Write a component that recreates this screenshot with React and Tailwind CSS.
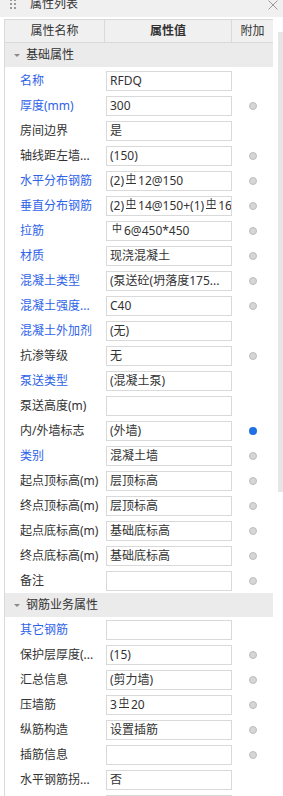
import React from "react";

const B = "text-[#2e63e8]";
const K = "text-[#333333]";

function R400() {
  return (
    <span className="inline-block relative -top-[3px] mx-[2px] text-[10px] leading-[9px] border-b border-[#333] pb-0">
      中
    </span>
  );
}
function R300() {
  return (
    <span className="inline-block relative -top-[3px] mx-[2px] text-[10px] leading-[10px]">中</span>
  );
}

const sec1 = [
  ["名称", true, "RFDQ", null],
  ["厚度(mm)", true, "300", "g"],
  ["房间边界", false, "是", null],
  ["轴线距左墙...", false, "(150)", "g"],
  ["水平分布钢筋", true, <>(2)<R400 />12@150</>, "g"],
  ["垂直分布钢筋", true, <>(2)<R400 />14@150+(1)<R400 />16</>, "g"],
  ["拉筋", true, <><R300 />6@450*450</>, "g"],
  ["材质", true, "现浇混凝土", "g"],
  ["混凝土类型", true, "(泵送砼(坍落度175...", "g"],
  ["混凝土强度...", true, "C40", "g"],
  ["混凝土外加剂", true, "(无)", null],
  ["抗渗等级", false, "无", "g"],
  ["泵送类型", true, "(混凝土泵)", null],
  ["泵送高度(m)", false, "", null],
  ["内/外墙标志", false, "(外墙)", "b"],
  ["类别", true, "混凝土墙", "g"],
  ["起点顶标高(m)", false, "层顶标高", "g"],
  ["终点顶标高(m)", false, "层顶标高", "g"],
  ["起点底标高(m)", false, "基础底标高", "g"],
  ["终点底标高(m)", false, "基础底标高", "g"],
  ["备注", false, "", "g"],
];

const sec2 = [
  ["其它钢筋", true, "", null],
  ["保护层厚度(...", false, "(15)", "g"],
  ["汇总信息", false, "(剪力墙)", "g"],
  ["压墙筋", false, <>3<R400 />20</>, "g"],
  ["纵筋构造", false, "设置插筋", "g"],
  ["插筋信息", false, "", "g"],
  ["水平钢筋拐...", false, "否", null],
  ["", false, "", null],
];

function Dot({ kind }) {
  if (!kind) return null;
  if (kind === "b")
    return <div className="w-[8px] h-[8px] rounded-full bg-[#1f6fe5]" />;
  return (
    <div className="w-[8px] h-[8px] rounded-full bg-[#d6d6d6] border border-[#bdbdbd]" />
  );
}

function Row({ r }) {
  const [label, blue, value, dot] = r;
  return (
    <div className="h-[25px] flex items-start pt-[3px]">
      <div
        className={`w-[101px] shrink-0 pl-[15px] h-[20px] leading-[20px] text-[12px] whitespace-nowrap overflow-hidden ${
          blue ? B : K
        }`}
      >
        {label}
      </div>
      <div className="w-[126px] shrink-0 h-[20px] border border-[#d9d9d9] bg-white pl-[3px] text-[12px] leading-[18px] text-[#333] whitespace-nowrap overflow-hidden">
        {value}
      </div>
      <div className="w-[42px] shrink-0 h-[20px] flex items-center justify-center">
        <Dot kind={dot} />
      </div>
    </div>
  );
}

function Section({ title }) {
  return (
    <div className="h-[24px] bg-[#ebebeb] flex items-center">
      <div className="ml-[9px] w-0 h-0 border-l-[3px] border-r-[3px] border-t-[3px] border-l-transparent border-r-transparent border-t-[#8a8a8a]" />
      <div className="ml-[6px] text-[12px] text-[#333]">{title}</div>
    </div>
  );
}

export default function App() {
  return (
    <div className="w-[283px] h-[796px] overflow-hidden bg-white font-['Noto_Sans','Noto_Sans_CJK_SC',sans-serif]">
      <div className="h-[17px] bg-[#f0f0f0] flex items-start relative">
        <div className="ml-[10px] -mt-[1px] grid grid-cols-2 gap-x-[2px] gap-y-[2px]">
          {[0, 1, 2, 3, 4, 5].map((i) => (
            <div key={i} className="w-[2px] h-[2px] bg-[#9a9a9a]" />
          ))}
        </div>
        <div className="ml-[14px] -mt-[5px] text-[12px] leading-[18px] text-[#333]">属性列表</div>
        <svg className="absolute right-[5px] top-[0px]" width="10" height="10" viewBox="0 0 10 10">
          <path d="M0.5 0.5 L9.5 9.5 M9.5 0.5 L0.5 9.5" stroke="#9a9a9a" strokeWidth="1" />
        </svg>
      </div>
      <div className="h-[2px]" />
      <div className="flex">
        <div className="w-[4px] shrink-0" />
        <div className="w-[269px] shrink-0 border-l border-[#d9d9d9]">
          <div className="h-[24px] flex bg-[#f0f0f0] border-t border-b border-[#d9d9d9] text-[12px] text-[#333]">
            <div className="w-[100px] border-r border-[#d9d9d9] flex items-center justify-center">属性名称</div>
            <div className="w-[127px] border-r border-[#d9d9d9] flex items-center justify-center font-semibold">属性值</div>
            <div className="flex-1 flex items-center justify-center">附加</div>
          </div>
          <Section title="基础属性" />
          <div className="h-px" />
          {sec1.map((r, i) => (
            <Row key={i} r={r} />
          ))}
          <Section title="钢筋业务属性" />
          {sec2.map((r, i) => (
            <Row key={i} r={r} />
          ))}
        </div>
        <div className="w-[5px] shrink-0" />
        <div className="w-[5px] shrink-0">
          <div className="mt-[13px] h-[460px] bg-[#e6e6e6]" />
        </div>
      </div>
    </div>
  );
}
